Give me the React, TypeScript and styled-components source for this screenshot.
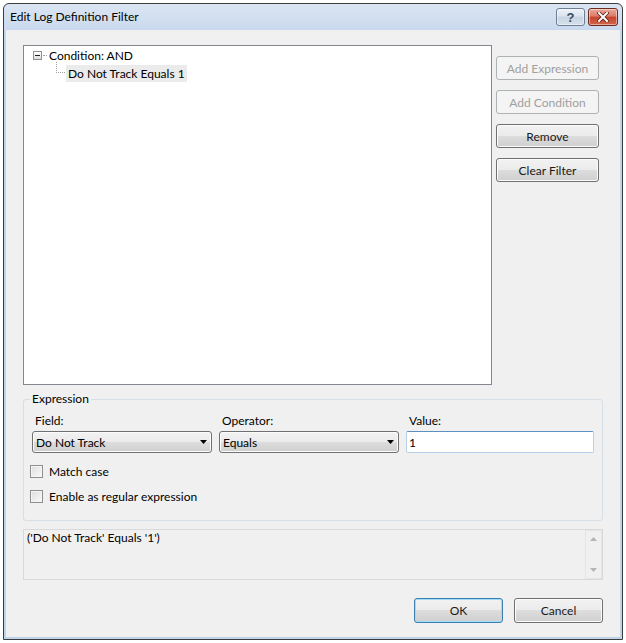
import styled, { createGlobalStyle } from "styled-components";

const uiFont = `"Segoe UI", Lato, "Liberation Sans", sans-serif`;

const GlobalStyle = createGlobalStyle`
  html, body {
    margin: 0;
    padding: 0;
    background: #ffffff;
  }
  body {
    font-family: ${uiFont};
    font-size: 12px;
    color: #000;
  }
`;

const Window = styled.div`
  margin: 3px 0 0 3px;
  width: 620px;
  height: 637px;
  box-sizing: border-box;
  border: 1px solid #3c3c3c;
  border-radius: 6px 6px 0 0;
  background: linear-gradient(#dbe6f3 0px, #c9d9ed 26px, #bfd3ea 40px, #bfd3ea 100%);
  padding: 0 2px 2px;
  display: flex;
  flex-direction: column;
  overflow: hidden;
`;

const TitleBar = styled.div`
  height: 26px;
  display: flex;
  align-items: center;
  justify-content: space-between;
  padding: 0 2px 0 4px;
`;

const Caption = styled.span`
  line-height: 16px;
`;

const CaptionButtons = styled.div`
  display: flex;
  gap: 3px;
`;

const CaptionButton = styled.div<{ $close?: boolean }>`
  width: ${(p) => (p.$close ? 30 : 29)}px;
  height: 18px;
  box-sizing: border-box;
  border: 1px solid ${(p) => (p.$close ? "#6e2b20" : "#6f7f93")};
  border-radius: 3px;
  display: flex;
  align-items: center;
  justify-content: center;
  background: ${(p) =>
    p.$close
      ? "linear-gradient(#eaa89a 0%, #dc7b66 45%, #c5442c 50%, #d4654d 100%)"
      : "linear-gradient(#eef2f8 0%, #dae3ee 45%, #c8d4e3 50%, #d6e0ec 100%)"};
  box-shadow: inset 0 0 0 1px rgba(255, 255, 255, 0.45);
  color: #3a4a5e;
  font-family: "Liberation Sans", sans-serif;
  font-weight: bold;
  font-size: 13px;
`;

const Client = styled.div`
  flex: 1;
  background: #f0f0f0;
  padding: 15px 17px 0;
  display: flex;
  flex-direction: column;
`;

const TopRow = styled.div`
  display: flex;
  gap: 4px;
`;

const TreeBox = styled.div`
  width: 469px;
  height: 340px;
  box-sizing: border-box;
  border: 1px solid #828790;
  background: #fff;
`;

const TreeRow = styled.div<{ $indent: number }>`
  height: 18px;
  display: flex;
  align-items: center;
  padding-left: ${(p) => p.$indent}px;
`;

const Expander = styled.span`
  width: 9px;
  height: 9px;
  box-sizing: border-box;
  border: 1px solid #919191;
  background: linear-gradient(#ffffff, #dcdcdc);
  display: flex;
  align-items: center;
  justify-content: center;

  &::after {
    content: "";
    width: 5px;
    height: 1px;
    background: #1e1e1e;
  }
`;

const HorizontalDots = styled.span`
  width: 4px;
  margin-left: 1px;
  border-top: 1px dotted #a0a0a0;
`;

const Connector = styled.span`
  align-self: flex-start;
  width: 9px;
  height: 11px;
  margin-top: -2px;
  box-sizing: border-box;
  border-left: 1px dotted #a0a0a0;
  border-bottom: 1px dotted #a0a0a0;
`;

const NodeLabel = styled.span<{ $selected?: boolean }>`
  line-height: 17px;
  padding: 0 2px;
  margin-left: ${(p) => (p.$selected ? 1 : 0)}px;
  background: ${(p) => (p.$selected ? "#ebebeb" : "transparent")};
`;

const ButtonColumn = styled.div`
  display: flex;
  flex-direction: column;
  gap: 10px;
  padding-top: 11px;
`;

const PushButton = styled.button<{ $width: number; $height?: number; $default?: boolean }>`
  width: ${(p) => p.$width}px;
  height: ${(p) => p.$height ?? 24}px;
  box-sizing: border-box;
  padding: 0;
  border: 1px solid ${(p) => (p.$default ? "#3c7fb1" : "#707070")};
  border-radius: 3px;
  background: linear-gradient(#f2f2f2 0%, #ebebeb 50%, #dddddd 50%, #cfcfcf 100%);
  box-shadow: inset 0 0 0 1px ${(p) => (p.$default ? "#9fdcf7" : "#fcfcfc")};
  font-family: ${uiFont};
  font-size: 12px;
  font-weight: 400;
  color: #1a1a1a;

  &:disabled {
    border-color: #adb2b5;
    background: #f4f4f4;
    box-shadow: none;
    color: #a0a0a0;
  }
`;

const GroupBox = styled.fieldset`
  margin: 6px 0 0;
  padding: 6px 8px 16px 6px;
  border: 1px solid #d5dfe5;
  border-radius: 3px;
  min-width: 0;
`;

const Legend = styled.legend`
  padding: 0 2px;
  margin-left: 0;
  line-height: 16px;
`;

const FieldGrid = styled.div`
  display: grid;
  grid-template-columns: 180px 180px 188px;
  column-gap: 7px;
  row-gap: 2px;
  margin-left: 2px;
`;

const FieldLabel = styled.span`
  line-height: 16px;
  padding-left: 3px;
`;

const Combo = styled.div`
  height: 22px;
  box-sizing: border-box;
  border: 1px solid #707070;
  border-radius: 3px;
  background: linear-gradient(#f2f2f2 0%, #ebebeb 50%, #dddddd 50%, #cfcfcf 100%);
  box-shadow: inset 0 0 0 1px #fcfcfc;
  display: flex;
  align-items: center;
  justify-content: space-between;
  padding: 0 4px 0 3px;
`;

const TextInput = styled.div`
  height: 22px;
  box-sizing: border-box;
  border: 1px solid #b7d1ea;
  border-top-color: #5f8fc0;
  border-radius: 2px;
  background: #fff;
  display: flex;
  align-items: center;
  padding-left: 2px;
`;

const CheckRow = styled.label<{ $first?: boolean }>`
  display: flex;
  align-items: center;
  gap: 6px;
  height: 16px;
  margin-top: ${(p) => (p.$first ? 10 : 9)}px;
`;

const CheckBox = styled.span`
  width: 13px;
  height: 13px;
  box-sizing: border-box;
  border: 1px solid #8e8f8f;
  background: linear-gradient(135deg, #dcdcdc, #fbfbfb);
  box-shadow: inset 0 0 0 1px #f4f4f4;
`;

const Summary = styled.div`
  margin-top: 8px;
  height: 51px;
  box-sizing: border-box;
  border: 1px solid #d9d9d9;
  background: #f0f0f0;
  display: flex;
`;

const SummaryText = styled.div`
  flex: 1;
  padding: 0 3px;
  line-height: 16px;
`;

const ScrollBar = styled.div`
  width: 17px;
  box-sizing: border-box;
  border: 1px solid #e4e4e4;
  display: flex;
  flex-direction: column;
  justify-content: space-between;
`;

const ScrollArrow = styled.div`
  height: 16px;
  display: flex;
  align-items: center;
  justify-content: center;
`;

const Footer = styled.div`
  margin-top: 18px;
  display: flex;
  justify-content: flex-end;
  gap: 11px;
`;

function DropArrow() {
  return (
    <svg width="7" height="4" viewBox="0 0 7 4">
      <path d="M0 0h7L3.5 4z" fill="#000" />
    </svg>
  );
}

function Triangle({ up }: { up?: boolean }) {
  return (
    <svg width="7" height="4" viewBox="0 0 7 4">
      <path d={up ? "M0 4h7L3.5 0z" : "M0 0h7L3.5 4z"} fill="#b4b4b4" />
    </svg>
  );
}

function CloseGlyph() {
  return (
    <svg width="12" height="10" viewBox="0 0 12 10">
      <path
        d="M2 1l8 8M10 1L2 9"
        stroke="#5a2018"
        strokeWidth="3.6"
        strokeLinecap="square"
      />
      <path
        d="M2 1l8 8M10 1L2 9"
        stroke="#ffffff"
        strokeWidth="2"
        strokeLinecap="square"
      />
    </svg>
  );
}

export default function App() {
  return (
    <>
      <GlobalStyle />
      <Window>
        <TitleBar>
          <Caption>Edit Log Definition Filter</Caption>
          <CaptionButtons>
            <CaptionButton>?</CaptionButton>
            <CaptionButton $close>
              <CloseGlyph />
            </CaptionButton>
          </CaptionButtons>
        </TitleBar>

        <Client>
          <TopRow>
            <TreeBox>
              <TreeRow $indent={9}>
                <Expander />
                <HorizontalDots />
                <NodeLabel>Condition: AND</NodeLabel>
              </TreeRow>
              <TreeRow $indent={32}>
                <Connector />
                <NodeLabel $selected>Do Not Track Equals 1</NodeLabel>
              </TreeRow>
            </TreeBox>

            <ButtonColumn>
              <PushButton $width={103} disabled>
                Add Expression
              </PushButton>
              <PushButton $width={103} disabled>
                Add Condition
              </PushButton>
              <PushButton $width={103}>Remove</PushButton>
              <PushButton $width={103}>Clear Filter</PushButton>
            </ButtonColumn>
          </TopRow>

          <GroupBox>
            <Legend>Expression</Legend>
            <FieldGrid>
              <FieldLabel>Field:</FieldLabel>
              <FieldLabel>Operator:</FieldLabel>
              <FieldLabel>Value:</FieldLabel>
              <Combo>
                <span>Do Not Track</span>
                <DropArrow />
              </Combo>
              <Combo>
                <span>Equals</span>
                <DropArrow />
              </Combo>
              <TextInput>1</TextInput>
            </FieldGrid>
            <CheckRow $first>
              <CheckBox />
              Match case
            </CheckRow>
            <CheckRow>
              <CheckBox />
              Enable as regular expression
            </CheckRow>
          </GroupBox>

          <Summary>
            <SummaryText>('Do Not Track' Equals '1')</SummaryText>
            <ScrollBar>
              <ScrollArrow>
                <Triangle up />
              </ScrollArrow>
              <ScrollArrow>
                <Triangle />
              </ScrollArrow>
            </ScrollBar>
          </Summary>

          <Footer>
            <PushButton $width={89} $height={25} $default>
              OK
            </PushButton>
            <PushButton $width={89} $height={25}>
              Cancel
            </PushButton>
          </Footer>
        </Client>
      </Window>
    </>
  );
}
